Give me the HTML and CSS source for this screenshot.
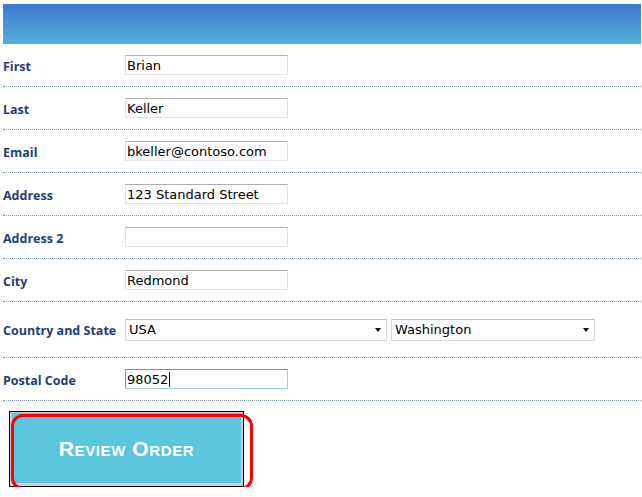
FILE: index.html
```html
<!DOCTYPE html>
<html>
<head>
<meta charset="utf-8">
<link rel="stylesheet" href="styles.css">
</head>
<body>
<div class="page">
  <div class="header"></div>
  <form class="form">
    <div class="row">
      <label class="lbl">First</label>
      <input class="txt" type="text" value="Brian">
    </div>
    <div class="row">
      <label class="lbl">Last</label>
      <input class="txt" type="text" value="Keller">
    </div>
    <div class="row">
      <label class="lbl">Email</label>
      <input class="txt" type="text" value="bkeller@contoso.com">
    </div>
    <div class="row">
      <label class="lbl">Address</label>
      <input class="txt" type="text" value="123 Standard Street">
    </div>
    <div class="row">
      <label class="lbl">Address 2</label>
      <input class="txt" type="text" value="">
    </div>
    <div class="row">
      <label class="lbl">City</label>
      <input class="txt" type="text" value="Redmond">
    </div>
    <div class="row row-tall">
      <label class="lbl">Country and State</label>
      <div class="selects">
        <div class="sel sel-country"><span class="sel-text">USA</span><span class="arrow"></span></div>
        <div class="sel sel-state"><span class="sel-text">Washington</span><span class="arrow"></span></div>
      </div>
    </div>
    <div class="row">
      <label class="lbl">Postal Code</label>
      <div class="txt txt-focus"><span>98052</span><span class="caret"></span></div>
    </div>
    <div class="actions">
      <div class="btn-frame">
        <div class="btn">Review Order</div>
        <div class="focus-ring"></div>
      </div>
    </div>
  </form>
</div>
</body>
</html>
```

FILE: styles.css
```css
html, body {
  margin: 0;
  padding: 0;
  background: #ffffff;
}

.page {
  padding: 4px 1px 0 3px;
}

.header {
  height: 40px;
  background: linear-gradient(to bottom, #3e78cd 0%, #4a93d6 50%, #54afdb 100%);
}

.form {
  margin: 0;
}

.row {
  display: grid;
  grid-template-columns: 122px 1fr;
  align-items: center;
  height: 42px;
  border-bottom: 1px dotted #8196c6;
}

.row-tall {
  height: 55px;
}

.lbl {
  font-family: "Open Sans", "Liberation Sans", sans-serif;
  font-weight: 700;
  font-size: 12.5px;
  color: #1f3d7a;
  letter-spacing: 0;
  padding-top: 2px;
}

.txt {
  box-sizing: border-box;
  width: 163px;
  height: 20px;
  margin: 0;
  padding: 0 1px;
  border: 1px solid #e2e3ea;
  border-top-color: #abadb3;
  font-family: "DejaVu Sans", Verdana, sans-serif;
  font-size: 13px;
  color: #000;
  background: #fff;
  outline: none;
  display: flex;
  align-items: center;
}

.txt-focus {
  border: 1px solid #a8cbe9;
  border-top-color: #569de5;
  border-left-color: #569de5;
}

.caret {
  width: 1px;
  height: 15px;
  background: #000;
  margin-left: 1px;
}

.selects {
  display: flex;
  gap: 4px;
}

.sel {
  box-sizing: border-box;
  height: 22px;
  border: 1px solid #d9d9d9;
  border-top-color: #c3c3c3;
  display: flex;
  align-items: center;
  justify-content: space-between;
  padding: 0 5px 0 3px;
  font-family: "DejaVu Sans", Verdana, sans-serif;
  font-size: 13px;
  color: #000;
  background: #fff;
}

.sel-country {
  width: 262px;
}

.sel-state {
  width: 204px;
}

.arrow {
  width: 0;
  height: 0;
  border-left: 3px solid transparent;
  border-right: 3px solid transparent;
  border-top: 4px solid #000;
}

.actions {
  padding: 10px 0 0 6px;
}

.btn-frame {
  position: relative;
  box-sizing: border-box;
  width: 235px;
  height: 76px;
  border: 1px solid #000;
  background: #c9cde9;
  padding: 1px 2px 2px 2px;
}

.btn {
  height: 70px;
  background: #5bc6dd;
  display: flex;
  align-items: center;
  justify-content: center;
  font-family: "Liberation Sans", Arial, sans-serif;
  font-weight: 700;
  font-size: 21px;
  letter-spacing: 0.6px;
  font-variant: small-caps;
  color: #ffffff;
  padding-top: 2px;
  box-sizing: border-box;
}

.focus-ring {
  position: absolute;
  left: 1px;
  top: 2px;
  width: 242px;
  height: 76px;
  box-sizing: border-box;
  border: 3px solid #ff0000;
  border-radius: 12px;
}
```
